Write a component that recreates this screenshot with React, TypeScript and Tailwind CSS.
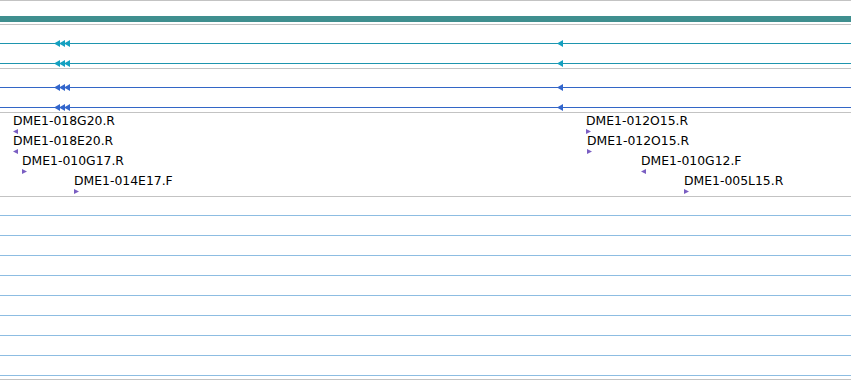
import React from 'react'

interface Feature {
    label: string
    x: number
    dir: 'left' | 'right'
}

// feature rows, each row is one line of labels
const featureRows: Feature[][] = [
    [{ label: 'DME1-018G20.R', x: 13, dir: 'left' }, { label: 'DME1-012O15.R', x: 586, dir: 'right' }],
    [{ label: 'DME1-018E20.R', x: 13, dir: 'left' }, { label: 'DME1-012O15.R', x: 587, dir: 'right' }],
    [{ label: 'DME1-010G17.R', x: 22, dir: 'right' }, { label: 'DME1-010G12.F', x: 641, dir: 'left' }],
    [{ label: 'DME1-014E17.F', x: 74, dir: 'right' }, { label: 'DME1-005L15.R', x: 684, dir: 'right' }],
]

const Head: React.FC<{ color: string }> = ({ color }) => (
    <svg width="6" height="7" viewBox="0 0 6 7" className="block">
        <polygon points="0,3.5 6,0 6,7" fill={color} />
    </svg>
)

// a line track with arrow heads sitting on it
const ArrowTrack: React.FC<{ color: string, head: string }> = ({ color, head }) => (
    <div className="relative h-px" style={{ backgroundColor: color }}>
        <div className="absolute left-[54px] top-[-3px] flex">
            <div className="-mr-[1px]"><Head color={head} /></div>
            <div className="-mr-[1px]"><Head color={head} /></div>
            <Head color={head} />
        </div>
        <div className="absolute left-[557px] top-[-3px]">
            <Head color={head} />
        </div>
    </div>
)

const Marker: React.FC<{ dir: 'left' | 'right' }> = ({ dir }) => (
    <svg width="5" height="5" viewBox="0 0 5 5" className="block mt-[1px]">
        {dir === 'left'
            ? <polygon points="0,2.5 5,0 5,5" fill="#7a5ec2" />
            : <polygon points="0,0 5,2.5 0,5" fill="#7a5ec2" />}
    </svg>
)

const Gray = () => <div className="h-px bg-[#c3c3c3]" />

const App: React.FC = () => {
    return (
        <div className="w-[851px] h-[380px] bg-white overflow-hidden flex flex-col font-['DejaVu_Sans',sans-serif]">
            <Gray />
            <div className="h-[15px]" />
            <div className="h-[6px] bg-[#3f8f8f]" />
            <div className="h-[2px]" />
            <Gray />

            <div className="h-[18px]" />
            <ArrowTrack color="#1e95ae" head="#14a0c0" />
            <div className="h-[19px]" />
            <ArrowTrack color="#1e95ae" head="#14a0c0" />
            <div className="h-[4px]" />
            <Gray />
            <div className="h-[18px]" />
            <ArrowTrack color="#3366c6" head="#3366cc" />
            <div className="h-[19px]" />
            <ArrowTrack color="#3366c6" head="#3366cc" />
            <div className="h-[4px]" />
            <Gray />

            <div className="flex flex-col pb-[3px]">
                {featureRows.map((row, i) => (
                    <div key={i} className="relative h-[20px]">
                        {row.map((f) => (
                            <div key={f.label + f.x} className="absolute top-[1px] flex flex-col" style={{ left: f.x }}>
                                <span className="text-[12.4px] leading-[14px] text-black whitespace-nowrap">{f.label}</span>
                                <Marker dir={f.dir} />
                            </div>
                        ))}
                    </div>
                ))}
            </div>

            <Gray />
            <div className="h-[18px]" />
            <div className="h-px bg-[#8dbde2]" />
            {Array.from({ length: 8 }).map((_, i) => (
                <div key={i} className="flex flex-col">
                    <div className="h-[19px]" />
                    <div className="h-px bg-[#8dbde2]" />
                </div>
            ))}
            <div className="h-[3px]" />
            <Gray />
        </div>
    )
}

export default App
